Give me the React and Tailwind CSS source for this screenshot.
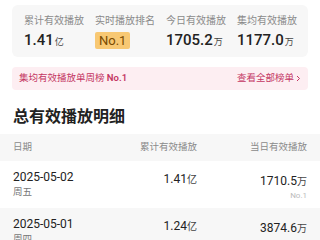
const stats = [
  { label: "累计有效播放", value: "1.41", unit: "亿" },
  { label: "实时播放排名", badge: "No.1" },
  { label: "今日有效播放", value: "1705.2", unit: "万" },
  { label: "集均有效播放", value: "1177.0", unit: "万" },
];

const rows = [
  { date: "2025-05-02", week: "周五", total: "1.41", day: "1710.5", rank: "No.1", bg: "bg-white" },
  { date: "2025-05-01", week: "周四", total: "1.24", day: "3874.6", rank: "No.1", bg: "bg-[#f7f7f7]" },
];

const App = () => {
  return (
    <div
      className="w-[320px] h-[240px] overflow-hidden bg-white text-[#222]"
      style={{ fontFamily: 'Roboto, "Noto Sans CJK SC", sans-serif' }}
    >
      {/* Summary card */}
      <div className="mx-3 mt-[5px] h-[52px] rounded-md bg-[#f7f7f7] pl-3 pt-[9px] flex">
        {stats.map((s, i) => (
          <div key={i} className="w-[73px]">
            <p className="text-[10px] leading-[14px] text-[#8a8a8a]">{s.label}</p>
            {s.badge ? (
              <span className="inline-block mt-[3px] px-[4px] h-[17px] leading-[17px] rounded-[2px] bg-[#f8c873] text-[13px] text-[#7a4a00]">
                {s.badge}
              </span>
            ) : (
              <p className="mt-[3px] leading-[18px]">
                <span className="text-[15px] font-medium">{s.value}</span>
                <span className="text-[9px] text-[#444] ml-[1px]">{s.unit}</span>
              </p>
            )}
          </div>
        ))}
      </div>

      {/* Ranking banner */}
      <div className="mx-3 mt-[10px] h-[23px] rounded bg-[#fdeef2] px-[7px] flex items-center justify-between text-[9.5px] text-[#c43663]">
        <span>
          集均有效播放单周榜 <span className="font-semibold">No.1</span>
        </span>
        <span className="flex items-center gap-[2px]">
          查看全部榜单
          <svg width="5" height="7" viewBox="0 0 5 7" fill="none">
            <path d="M1 1l2.5 2.5L1 6" stroke="#c43663" strokeWidth="1" />
          </svg>
        </span>
      </div>

      {/* Detail title */}
      <h2 className="mt-[17px] px-[13px] text-[16px] leading-[20px] font-bold">总有效播放明细</h2>

      {/* Table header */}
      <div className="mt-[7px] h-[27px] bg-[#f7f7f7] px-[13px] flex items-center text-[9.5px] text-[#8a8a8a]">
        <span className="flex-1">日期</span>
        <span className="w-[100px] text-right">累计有效播放</span>
        <span className="w-[110px] text-right">当日有效播放</span>
      </div>

      {rows.map((r, i) => (
        <div key={i} className={`${r.bg} h-[47px] px-[13px] pt-[9px] flex items-start`}>
          <div className="flex-1">
            <p className="text-[12px] leading-[15px]">{r.date}</p>
            <p className="text-[9.5px] leading-[14px] text-[#777]">{r.week}</p>
          </div>
          <p className="w-[100px] text-right leading-[16px]">
            <span className="text-[12px]">{r.total}</span>
            <span className="text-[10px] text-[#444]">亿</span>
          </p>
          <div className="w-[110px] text-right">
            <p className="leading-[17px] mt-[1px]">
              <span className="text-[12px]">{r.day}</span>
              <span className="text-[10px] text-[#444]">万</span>
            </p>
            <p className="text-[8px] leading-[11px] text-[#bbb]">{r.rank}</p>
          </div>
        </div>
      ))}
    </div>
  );
};

export default App;
